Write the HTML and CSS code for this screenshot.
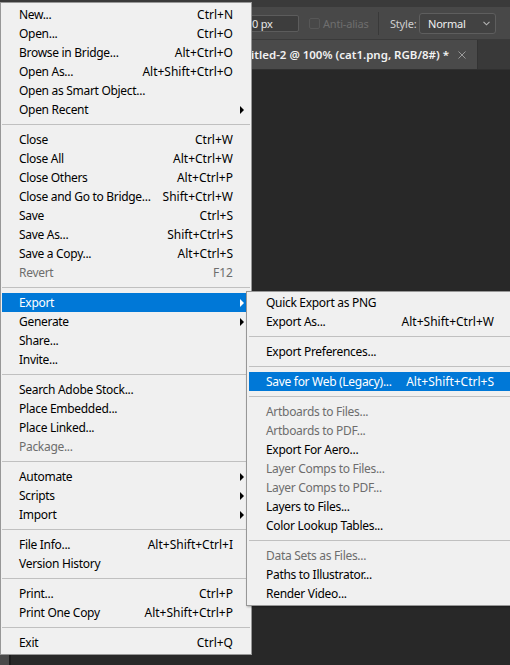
FILE: index.html
```html
<!DOCTYPE html>
<html>
<head>
<meta charset="utf-8">
<link rel="stylesheet" href="styles.css">
</head>
<body>
<div class="app">
  <div class="menubar"></div>
  <div class="options">
    <span class="opt-spacer"></span>
    <span class="input">0 px</span>
    <span class="checkbox"></span>
    <span class="opt-dim">Anti-alias</span>
    <span class="vdiv"></span>
    <span class="opt-label">Style:</span>
    <span class="select">Normal<svg class="chev" width="7" height="5" viewBox="0 0 7 5"><path d="M0.5 0.8 L3.5 3.8 L6.5 0.8" fill="none" stroke="#b4b4b4" stroke-width="1.1"/></svg></span>
  </div>
  <div class="tabs">
    <div class="tab"><span class="tab-title">Untitled-2 @ 100% (cat1.png, RGB/8#) *</span><svg class="tab-close" width="8" height="8" viewBox="0 0 8 8"><path d="M0.5 0.5 L7.5 7.5 M7.5 0.5 L0.5 7.5" stroke="#9a9a9a" stroke-width="1"/></svg></div>
  </div>
  <div class="canvas"><div class="toolstrip"></div></div>
</div>

<div class="menu main">
  <div class="item"><span class="label">New...</span><span class="key">Ctrl+N</span><span class="arrow"></span></div>
  <div class="item"><span class="label">Open...</span><span class="key">Ctrl+O</span><span class="arrow"></span></div>
  <div class="item"><span class="label">Browse in Bridge...</span><span class="key">Alt+Ctrl+O</span><span class="arrow"></span></div>
  <div class="item"><span class="label">Open As...</span><span class="key">Alt+Shift+Ctrl+O</span><span class="arrow"></span></div>
  <div class="item"><span class="label">Open as Smart Object...</span><span class="key"></span><span class="arrow"></span></div>
  <div class="item"><span class="label">Open Recent</span><span class="key"></span><span class="arrow"><i class="tri"></i></span></div>
  <div class="sep"></div>
  <div class="item"><span class="label">Close</span><span class="key">Ctrl+W</span><span class="arrow"></span></div>
  <div class="item"><span class="label">Close All</span><span class="key">Alt+Ctrl+W</span><span class="arrow"></span></div>
  <div class="item"><span class="label">Close Others</span><span class="key">Alt+Ctrl+P</span><span class="arrow"></span></div>
  <div class="item"><span class="label">Close and Go to Bridge...</span><span class="key">Shift+Ctrl+W</span><span class="arrow"></span></div>
  <div class="item"><span class="label">Save</span><span class="key">Ctrl+S</span><span class="arrow"></span></div>
  <div class="item"><span class="label">Save As...</span><span class="key">Shift+Ctrl+S</span><span class="arrow"></span></div>
  <div class="item"><span class="label">Save a Copy...</span><span class="key">Alt+Ctrl+S</span><span class="arrow"></span></div>
  <div class="item disabled"><span class="label">Revert</span><span class="key">F12</span><span class="arrow"></span></div>
  <div class="sep"></div>
  <div class="item active"><span class="label">Export</span><span class="key"></span><span class="arrow"><i class="tri"></i></span></div>
  <div class="item"><span class="label">Generate</span><span class="key"></span><span class="arrow"><i class="tri"></i></span></div>
  <div class="item"><span class="label">Share...</span><span class="key"></span><span class="arrow"></span></div>
  <div class="item"><span class="label">Invite...</span><span class="key"></span><span class="arrow"></span></div>
  <div class="sep"></div>
  <div class="item"><span class="label">Search Adobe Stock...</span><span class="key"></span><span class="arrow"></span></div>
  <div class="item"><span class="label">Place Embedded...</span><span class="key"></span><span class="arrow"></span></div>
  <div class="item"><span class="label">Place Linked...</span><span class="key"></span><span class="arrow"></span></div>
  <div class="item disabled"><span class="label">Package...</span><span class="key"></span><span class="arrow"></span></div>
  <div class="sep"></div>
  <div class="item"><span class="label">Automate</span><span class="key"></span><span class="arrow"><i class="tri"></i></span></div>
  <div class="item"><span class="label">Scripts</span><span class="key"></span><span class="arrow"><i class="tri"></i></span></div>
  <div class="item"><span class="label">Import</span><span class="key"></span><span class="arrow"><i class="tri"></i></span></div>
  <div class="sep"></div>
  <div class="item"><span class="label">File Info...</span><span class="key">Alt+Shift+Ctrl+I</span><span class="arrow"></span></div>
  <div class="item"><span class="label">Version History</span><span class="key"></span><span class="arrow"></span></div>
  <div class="sep"></div>
  <div class="item"><span class="label">Print...</span><span class="key">Ctrl+P</span><span class="arrow"></span></div>
  <div class="item"><span class="label">Print One Copy</span><span class="key">Alt+Shift+Ctrl+P</span><span class="arrow"></span></div>
  <div class="sep"></div>
  <div class="item"><span class="label">Exit</span><span class="key">Ctrl+Q</span><span class="arrow"></span></div>
</div>

<div class="menu sub">
  <div class="item"><span class="label">Quick Export as PNG</span><span class="key"></span><span class="arrow"></span></div>
  <div class="item"><span class="label">Export As...</span><span class="key">Alt+Shift+Ctrl+W</span><span class="arrow"></span></div>
  <div class="sep"></div>
  <div class="item"><span class="label">Export Preferences...</span><span class="key"></span><span class="arrow"></span></div>
  <div class="sep"></div>
  <div class="item active"><span class="label">Save for Web (Legacy)...</span><span class="key">Alt+Shift+Ctrl+S</span><span class="arrow"></span></div>
  <div class="sep"></div>
  <div class="item disabled"><span class="label">Artboards to Files...</span><span class="key"></span><span class="arrow"></span></div>
  <div class="item disabled"><span class="label">Artboards to PDF...</span><span class="key"></span><span class="arrow"></span></div>
  <div class="item"><span class="label">Export For Aero...</span><span class="key"></span><span class="arrow"></span></div>
  <div class="item disabled"><span class="label">Layer Comps to Files...</span><span class="key"></span><span class="arrow"></span></div>
  <div class="item disabled"><span class="label">Layer Comps to PDF...</span><span class="key"></span><span class="arrow"></span></div>
  <div class="item"><span class="label">Layers to Files...</span><span class="key"></span><span class="arrow"></span></div>
  <div class="item"><span class="label">Color Lookup Tables...</span><span class="key"></span><span class="arrow"></span></div>
  <div class="sep"></div>
  <div class="item disabled"><span class="label">Data Sets as Files...</span><span class="key"></span><span class="arrow"></span></div>
  <div class="item"><span class="label">Paths to Illustrator...</span><span class="key"></span><span class="arrow"></span></div>
  <div class="item"><span class="label">Render Video...</span><span class="key"></span><span class="arrow"></span></div>
</div>
</body>
</html>
```

FILE: styles.css
```css
html, body {
  margin: 0;
  padding: 0;
}
body {
  width: 510px;
  height: 665px;
  overflow: hidden;
  position: relative;
  background: #282828;
  font-family: "Noto Sans", "Open Sans", sans-serif;
}
.app {
  display: flex;
  flex-direction: column;
  height: 665px;
}
.menubar {
  height: 7px;
  background: #3a3a3a;
}
.options {
  height: 33px;
  background: #484848;
  border-bottom: 1px solid #3a3a3a;
  display: flex;
  align-items: center;
  padding-left: 195px;
  font-size: 11px;
  letter-spacing: -0.2px;
  box-sizing: border-box;
  white-space: nowrap;
}
.opt-spacer {
  width: 52px;
  flex: none;
}
.opt-label {
  color: #cfcfcf;
  margin-left: 11px;
  width: 24px;
  flex: none;
}
.input {
  width: 52px;
  height: 17px;
  box-sizing: border-box;
  flex: none;
  background: #3d3d3d;
  border: 1px solid #5c5c5c;
  border-radius: 2px;
  color: #e8e8e8;
  padding-left: 4px;
  line-height: 15px;
}
.checkbox {
  width: 9px;
  height: 9px;
  border: 1px solid #575757;
  border-radius: 2px;
  margin-left: 10px;
  flex: none;
}
.opt-dim {
  color: #6e6e6e;
  margin-left: 3px;
  width: 40px;
  flex: none;
}
.vdiv {
  width: 1px;
  height: 23px;
  background: #393939;
  margin-left: 15px;
  flex: none;
}
.select {
  margin-left: 5px;
  width: 77px;
  height: 21px;
  box-sizing: border-box;
  border: 1px solid #5e5e5e;
  border-radius: 3px;
  background: #424242;
  color: #f0f0f0;
  display: flex;
  align-items: center;
  justify-content: space-between;
  padding: 0 5px 0 8px;
  flex: none;
}
.chev {
  display: block;
}
.tabs {
  height: 30px;
  background: #393939;
  display: flex;
  border-bottom: 1px solid #303030;
  box-sizing: border-box;
}
.tab {
  margin-left: 176px;
  width: 302px;
  background: #4a4a4a;
  display: flex;
  align-items: center;
  justify-content: flex-end;
  padding-right: 11px;
  box-sizing: border-box;
  gap: 9px;
  border-right: 1px solid #333;
}
.tab-title {
  color: #f2f2f2;
  font-size: 11.5px;
  font-weight: 600;
  white-space: nowrap;
}
.tab-close {
  flex: none;
}
.canvas {
  flex: 1;
  background: #282828;
  display: flex;
}
.toolstrip {
  width: 9px;
  background: #4a4a4a;
  border-right: 2px solid #1c1c1c;
}

.menu {
  position: absolute;
  background: #f0f0f0;
  border: 1px solid #979797;
  box-sizing: border-box;
  font-size: 12px;
  color: #000;
}
.main {
  left: 0;
  top: 2px;
  width: 252px;
  padding: 2px 1px;
}
.sub {
  left: 246px;
  top: 291px;
  width: 270px;
  padding: 1px 4px 2px 2px;
  box-shadow: 1px 1px 2px rgba(0, 0, 0, 0.3);
}
.item {
  display: flex;
  align-items: center;
  height: 19px;
  line-height: 19px;
  padding-left: 17px;
  white-space: nowrap;
}
.label {
  flex: 1;
  letter-spacing: -0.3px;
}
.key {
  flex: none;
}
.arrow {
  width: 17px;
  flex: none;
  display: flex;
  align-items: center;
  padding-left: 7px;
  box-sizing: border-box;
  height: 19px;
}
.tri {
  display: block;
  width: 0;
  height: 0;
  border-left: 4px solid #000;
  border-top: 4px solid transparent;
  border-bottom: 4px solid transparent;
}
.item.active {
  background: #0078d7;
  color: #fff;
}
.item.active .tri {
  border-left-color: #fff;
}
.item.disabled {
  color: #6d6d6d;
}
.sep {
  height: 1px;
  background: #c0c0c0;
  margin: 5px 0;
}
```
